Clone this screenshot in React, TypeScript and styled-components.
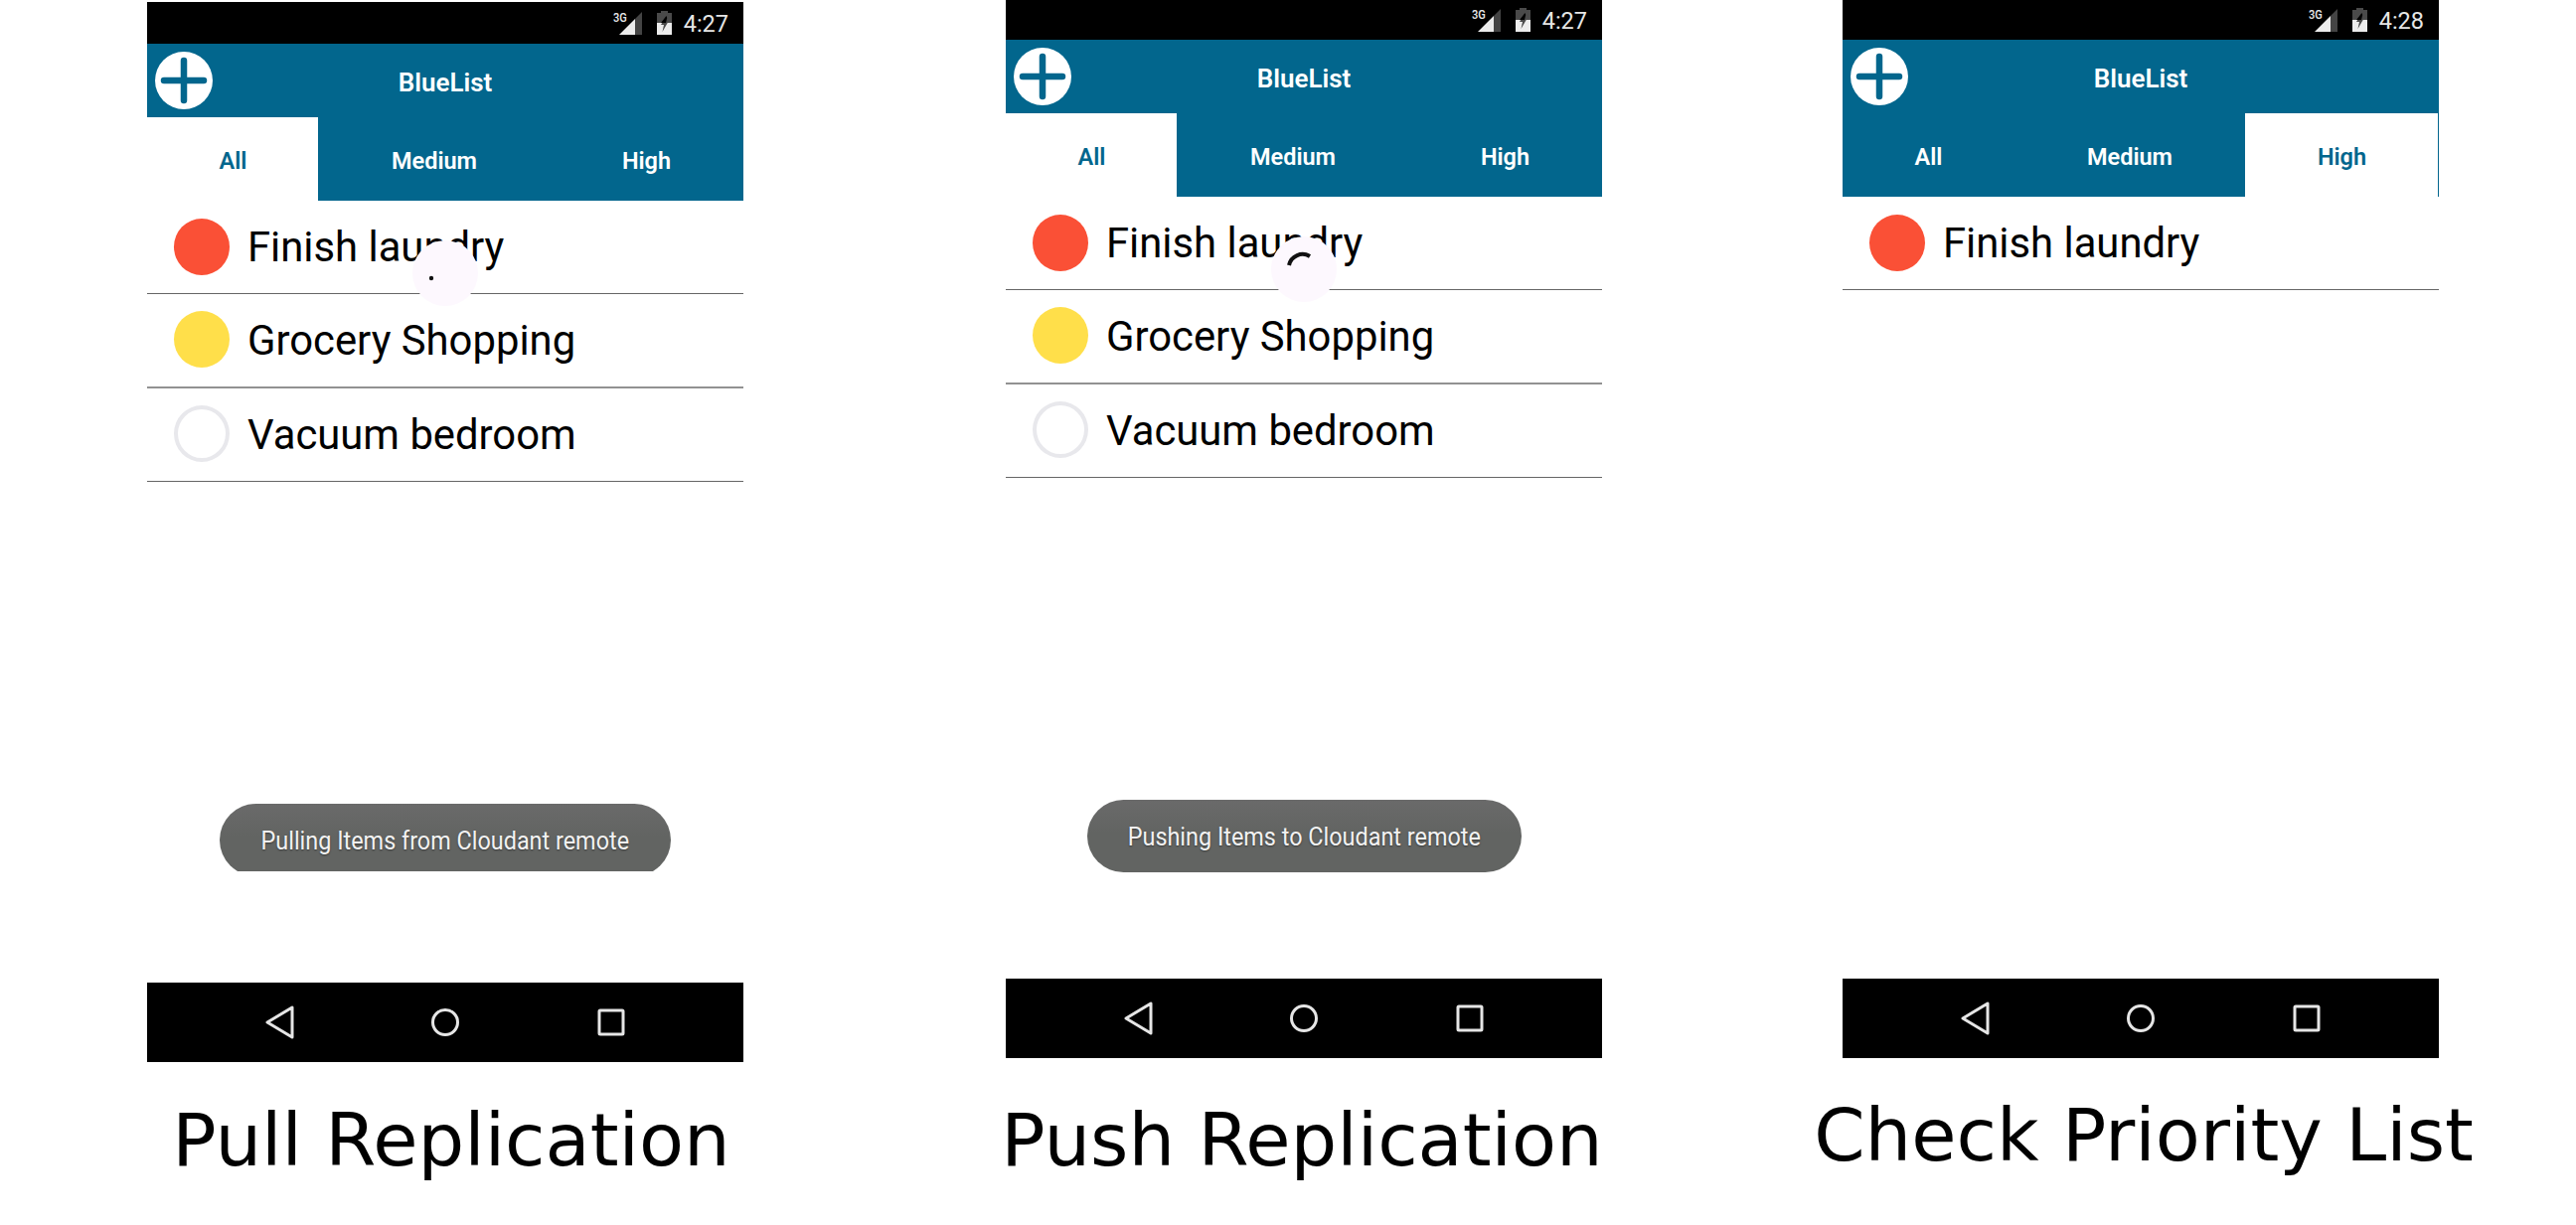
import React from 'react';
import styled, { createGlobalStyle } from 'styled-components';

const BLUE = '#02668d';

type Priority = 'high' | 'medium' | 'none';

const dotColors: Record<Priority, string> = {
  high: '#fa5036',
  medium: '#ffdf4a',
  none: 'transparent',
};

const GlobalStyle = createGlobalStyle`
  html, body {
    margin: 0;
    padding: 0;
    background: #ffffff;
  }
  body {
    font-family: Roboto, 'Liberation Sans', sans-serif;
    overflow: hidden;
  }
`;

const Page = styled.div`
  display: flex;
  width: 2592px;
  height: 1233px;
  overflow: hidden;
`;

const Column = styled.section<{ $left: number; $top: number }>`
  display: flex;
  flex-direction: column;
  flex: none;
  width: 600px;
  margin-left: ${p => p.$left}px;
  padding-top: ${p => p.$top}px;
`;

const Phone = styled.div`
  display: flex;
  flex-direction: column;
  background: #ffffff;
`;

const StatusBar = styled.div<{ $height: number }>`
  display: flex;
  align-items: center;
  justify-content: flex-end;
  height: ${p => p.$height}px;
  padding-right: 15px;
  background: #000000;
`;

const SignalWrap = styled.div`
  position: relative;
  display: flex;
  width: 23px;
  height: 23px;
  margin-right: 15px;
`;

const NetworkBadge = styled.span`
  position: absolute;
  left: -6px;
  top: -1px;
  font-size: 13px;
  line-height: 14px;
  font-weight: 500;
  color: #e8e8e8;
  transform: scaleX(0.85);
  transform-origin: left center;
`;

const Clock = styled.span`
  margin-left: 12px;
  padding-top: 2px;
  font-size: 23.5px;
  line-height: 26px;
  color: #e6e6e6;
`;

const AppBar = styled.header`
  display: grid;
  grid-template-columns: 1fr auto 1fr;
  align-items: center;
  height: 74px;
  padding-left: 8px;
  padding-right: 8px;
  background: ${BLUE};
`;

const AddButton = styled.svg`
  display: block;
  width: 58px;
  height: 58px;
`;

const Title = styled.h1`
  margin: 0;
  padding-top: 3px;
  font-size: 26px;
  line-height: 30px;
  font-weight: 600;
  color: #ffffff;
`;

const TabBar = styled.nav`
  display: grid;
  grid-template-columns: 173px 232px 195px;
  height: 84px;
  background: ${BLUE};
`;

const Tab = styled.div<{ $active: boolean }>`
  display: flex;
  align-items: center;
  justify-content: center;
  padding-top: 3px;
  font-size: 23.5px;
  font-weight: 600;
  color: ${p => (p.$active ? BLUE : '#ffffff')};
  background: ${p => (p.$active ? '#ffffff' : 'transparent')};
  box-shadow: ${p => (p.$active ? `inset -1px 0 0 ${BLUE}` : 'none')};
`;

const Body = styled.main`
  position: relative;
  height: 787px;
  overflow: hidden;
`;

const Row = styled.div<{ $thick?: boolean }>`
  box-sizing: border-box;
  display: flex;
  align-items: center;
  gap: 18px;
  height: 94.3px;
  padding: 0 0 1px 27px;
  border-bottom: ${p => (p.$thick ? '2px solid #929292' : '1px solid #666666')};
`;

const PriorityDot = styled.span<{ $priority: Priority }>`
  box-sizing: border-box;
  flex: none;
  width: 56px;
  height: 57px;
  border-radius: 50%;
  background: ${p => dotColors[p.$priority]};
  border: ${p => (p.$priority === 'none' ? '4px solid #e8e8ec' : 'none')};
`;

const RowLabel = styled.span`
  padding-top: 2px;
  font-size: 41.8px;
  line-height: 50px;
  color: #000000;
`;

const Spinner = styled.svg<{ $top: number }>`
  position: absolute;
  left: 267px;
  top: ${p => p.$top}px;
  width: 66px;
  height: 66px;
`;

const ToastClip = styled.div<{ $width: number; $height: number }>`
  position: absolute;
  left: 50%;
  top: 607px;
  width: ${p => p.$width}px;
  height: ${p => p.$height}px;
  margin-left: ${p => -p.$width / 2}px;
  overflow: hidden;
`;

const ToastBubble = styled.div`
  display: flex;
  align-items: center;
  justify-content: center;
  height: 73px;
  border-radius: 37px;
  background: linear-gradient(#6a6a6a, #626462 45%);
`;

const ToastText = styled.span`
  flex: none;
  font-size: 26px;
  line-height: 30px;
  white-space: nowrap;
  color: #f2f2f2;
  text-shadow: 0 1px 2px rgba(0, 0, 0, 0.45);
  transform: scaleX(0.9);
`;

const NavBar = styled.footer`
  display: grid;
  grid-template-columns: repeat(3, 167px);
  justify-content: center;
  justify-items: center;
  align-items: center;
  height: 80px;
  background: #000000;
`;

const NavIcon = styled.svg`
  display: block;
  width: 32px;
  height: 34px;
  fill: none;
  stroke: #e6e6e6;
  stroke-width: 3;
  stroke-linejoin: round;
`;

const Caption = styled.h2<{ $nudge: number; $gap: number }>`
  display: flex;
  justify-content: center;
  margin: ${p => p.$gap}px 0 0 ${p => p.$nudge}px;
  width: 600px;
  font-family: 'DejaVu Sans', sans-serif;
  font-size: 73.6px;
  line-height: 84px;
  font-weight: 400;
  white-space: nowrap;
  color: #000000;
`;

const SignalIcon = () => (
  <svg width="23" height="23" viewBox="0 0 23 23">
    <path d="M0 23 L16 7 V23 Z" fill="#ececec" />
    <path d="M16 7 L23 0 V23 H16 Z" fill="#444444" />
  </svg>
);

const BatteryIcon = () => (
  <svg width="15" height="24" viewBox="0 0 15 24">
    <path d="M4 0 H11 V2 H15 V24 H0 V2 H4 Z" fill="#4a4a4a" />
    <path d="M0 12 H15 V24 H0 Z" fill="#ececec" />
    <path d="M9.5 5 L4 14 H7 L5.5 21 L11 11.5 H8 Z" fill="#4a4a4a" />
    <path d="M9.5 5 L4 12 H9 L10.2 7 Z" fill="#000000" />
  </svg>
);

const PlusIcon = () => (
  <AddButton viewBox="0 0 58 58">
    <circle cx="29" cy="29" r="29" fill="#ffffff" />
    <path d="M29 9 V49 M9 29 H49" stroke={BLUE} strokeWidth="6.5" strokeLinecap="round" />
  </AddButton>
);

type SpinnerKind = 'dot' | 'arc';

const RefreshSpinner = ({ kind, top }: { kind: SpinnerKind; top: number }) => (
  <Spinner $top={top} viewBox="0 0 66 66">
    <circle cx="33" cy="33" r="33" fill="#fdf8fe" />
    {kind === 'dot' ? (
      <circle cx="19" cy="38" r="2.2" fill="#111111" />
    ) : (
      <path d="M18 29 A 14 14 0 0 1 39 20" fill="none" stroke="#111111" strokeWidth="4" />
    )}
  </Spinner>
);

interface Screen {
  caption: string;
  clock: string;
  left: number;
  top: number;
  statusHeight: number;
  captionGap: number;
  captionNudge: number;
  activeTab: string;
  items: { label: string; priority: Priority }[];
  spinner?: { kind: SpinnerKind; top: number };
  toast?: { text: string; width: number; height: number };
}

const allItems: Screen['items'] = [
  { label: 'Finish laundry', priority: 'high' },
  { label: 'Grocery Shopping', priority: 'medium' },
  { label: 'Vacuum bedroom', priority: 'none' },
];

const screens: Screen[] = [
  {
    caption: 'Pull Replication',
    clock: '4:27',
    left: 148,
    top: 2,
    statusHeight: 42,
    captionGap: 37,
    captionNudge: 6,
    activeTab: 'All',
    items: allItems,
    spinner: { kind: 'dot', top: 40 },
    toast: { text: 'Pulling Items from Cloudant remote', width: 454, height: 68 },
  },
  {
    caption: 'Push Replication',
    clock: '4:27',
    left: 264,
    top: 0,
    statusHeight: 40,
    captionGap: 41,
    captionNudge: -2,
    activeTab: 'All',
    items: allItems,
    spinner: { kind: 'arc', top: 40 },
    toast: { text: 'Pushing Items to Cloudant remote', width: 437, height: 73 },
  },
  {
    caption: 'Check Priority List',
    clock: '4:28',
    left: 242,
    top: 0,
    statusHeight: 40,
    captionGap: 36,
    captionNudge: 3,
    activeTab: 'High',
    items: allItems.slice(0, 1),
  },
];

const tabs = ['All', 'Medium', 'High'];

const PhoneScreen = ({ screen }: { screen: Screen }) => (
  <Column $left={screen.left} $top={screen.top}>
    <Phone>
      <StatusBar $height={screen.statusHeight}>
        <SignalWrap>
          <SignalIcon />
          <NetworkBadge>3G</NetworkBadge>
        </SignalWrap>
        <BatteryIcon />
        <Clock>{screen.clock}</Clock>
      </StatusBar>
      <AppBar>
        <PlusIcon />
        <Title>BlueList</Title>
      </AppBar>
      <TabBar>
        {tabs.map(tab => (
          <Tab key={tab} $active={tab === screen.activeTab}>
            {tab}
          </Tab>
        ))}
      </TabBar>
      <Body>
        {screen.items.map((item, index) => (
          <Row key={item.label} $thick={index === 1}>
            <PriorityDot $priority={item.priority} />
            <RowLabel>{item.label}</RowLabel>
          </Row>
        ))}
        {screen.spinner && <RefreshSpinner kind={screen.spinner.kind} top={screen.spinner.top} />}
        {screen.toast && (
          <ToastClip $width={screen.toast.width} $height={screen.toast.height}>
            <ToastBubble>
              <ToastText>{screen.toast.text}</ToastText>
            </ToastBubble>
          </ToastClip>
        )}
      </Body>
      <NavBar>
        <NavIcon viewBox="0 0 32 34">
          <path d="M29 2 V32 L4 17 Z" />
        </NavIcon>
        <NavIcon viewBox="0 0 32 34">
          <circle cx="16" cy="17" r="12.5" />
        </NavIcon>
        <NavIcon viewBox="0 0 32 34">
          <rect x="4" y="5" width="24" height="24" rx="1" />
        </NavIcon>
      </NavBar>
    </Phone>
    <Caption $gap={screen.captionGap} $nudge={screen.captionNudge}>
      {screen.caption}
    </Caption>
  </Column>
);

const App: React.FC = () => {
  return (
    <>
      <GlobalStyle />
      <Page>
        {screens.map(screen => (
          <PhoneScreen key={screen.caption} screen={screen} />
        ))}
      </Page>
    </>
  );
};

export default App;
